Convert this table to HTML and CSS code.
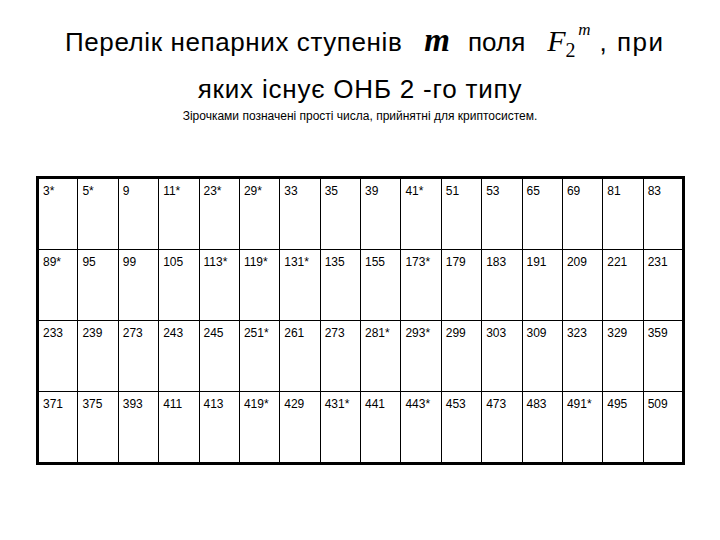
FILE: index.html
```html
<!DOCTYPE html>
<html>
<head>
<meta charset="utf-8">
<link rel="stylesheet" href="styles.css">
</head>
<body>
<div class="page">
  <div class="title">
    <div class="line1"><span class="t1">Перелік непарних ступенів</span><span class="m">m</span><span class="pol">поля</span><span class="f">F<span class="sub">2</span><span class="sup">m</span></span><span class="pri">, при</span></div>
    <div class="line2">яких існує ОНБ 2 -го типу</div>
    <div class="note">Зірочками позначені прості числа, прийнятні для криптосистем.</div>
  </div>
  <table class="grid">
    <tr><td>3*</td><td>5*</td><td>9</td><td>11*</td><td>23*</td><td>29*</td><td>33</td><td>35</td><td>39</td><td>41*</td><td>51</td><td>53</td><td>65</td><td>69</td><td>81</td><td>83</td></tr>
    <tr><td>89*</td><td>95</td><td>99</td><td>105</td><td>113*</td><td>119*</td><td>131*</td><td>135</td><td>155</td><td>173*</td><td>179</td><td>183</td><td>191</td><td>209</td><td>221</td><td>231</td></tr>
    <tr><td>233</td><td>239</td><td>273</td><td>243</td><td>245</td><td>251*</td><td>261</td><td>273</td><td>281*</td><td>293*</td><td>299</td><td>303</td><td>309</td><td>323</td><td>329</td><td>359</td></tr>
    <tr><td>371</td><td>375</td><td>393</td><td>411</td><td>413</td><td>419*</td><td>429</td><td>431*</td><td>441</td><td>443*</td><td>453</td><td>473</td><td>483</td><td>491*</td><td>495</td><td>509</td></tr>
  </table>
</div>
</body>
</html>
```
FILE: styles.css
```css
html, body {
  margin: 0;
  padding: 0;
  background: #fff;
}
.page {
  width: 720px;
  height: 540px;
  font-family: "Liberation Sans", Arial, sans-serif;
  color: #000;
  overflow: hidden;
}
.title {
  padding-top: 25px;
}
.line1 {
  display: flex;
  align-items: baseline;
  padding-left: 65px;
  font-size: 26px;
  line-height: 30px;
  height: 30px;
  white-space: nowrap;
}
.t1 {
  letter-spacing: 0.6px;
}
.m {
  font-family: "Liberation Serif", "Times New Roman", serif;
  font-style: italic;
  font-weight: bold;
  font-size: 33px;
  margin-left: 22px;
}
.pol {
  margin-left: 18px;
}
.f {
  font-family: "Liberation Serif", "Times New Roman", serif;
  font-style: italic;
  font-size: 30px;
  position: relative;
  margin-left: 22px;
}
.sub {
  font-style: normal;
  font-size: 20px;
  position: relative;
  top: 6px;
}
.sup {
  font-size: 17px;
  position: absolute;
  left: 31px;
  top: -11px;
}
.pri {
  margin-left: 24px;
  letter-spacing: 1.5px;
}
.line2 {
  text-align: center;
  font-size: 26px;
  letter-spacing: 0.8px;
  line-height: 30px;
  margin-top: 19px;
}
.note {
  text-align: center;
  font-size: 12px;
  line-height: 14px;
  margin-top: 5px;
}
.grid {
  border-collapse: collapse;
  margin-top: 53px;
  margin-left: 36px;
  width: 649px;
  border: 3px solid #000;
  table-layout: fixed;
}
.grid td {
  border: 1px solid #000;
  height: 62px;
  padding: 5px 4px 3px;
  vertical-align: top;
  font-size: 12px;
  line-height: 14px;
}
```
